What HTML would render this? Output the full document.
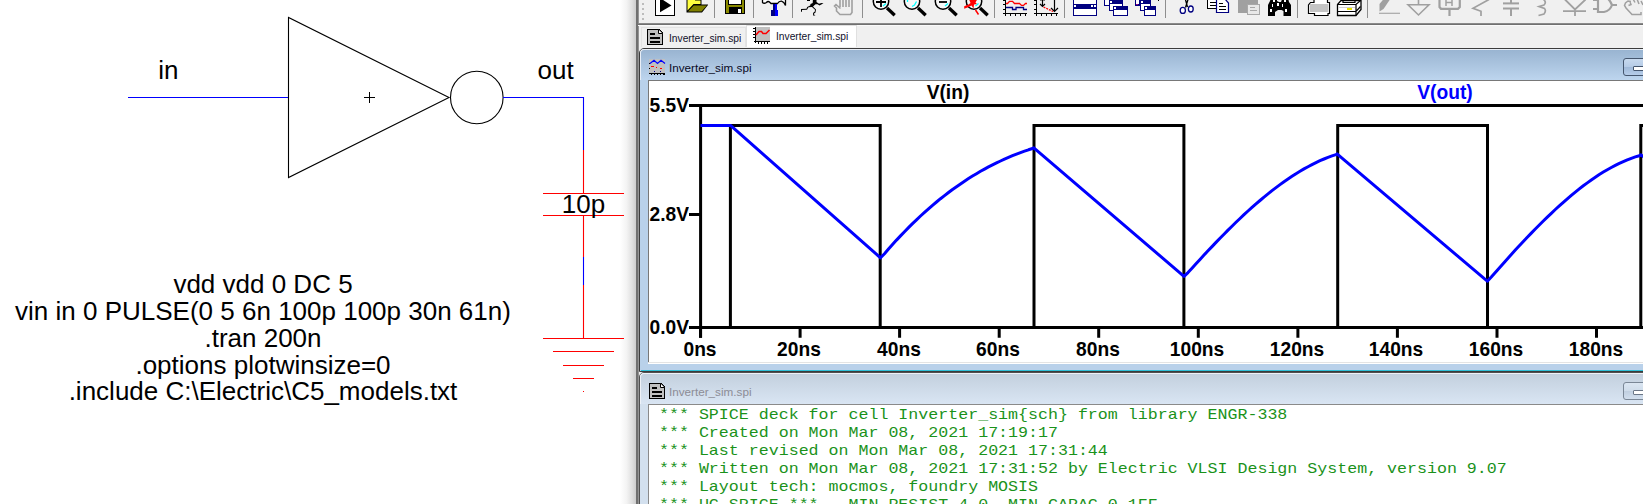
<!DOCTYPE html>
<html><head><meta charset="utf-8">
<style>
html,body{margin:0;padding:0;background:#fff;}
body{width:1643px;height:504px;position:relative;overflow:hidden;font-family:"Liberation Sans",sans-serif;}
.abs{position:absolute;}
.t{position:absolute;white-space:pre;color:#000;font-size:26px;}
#sch{position:absolute;left:0;top:0;width:640px;height:504px;}
.spice{line-height:26.8px;text-align:center;transform-origin:50% 0;}
#shadow{position:absolute;left:620px;top:0;width:16px;height:504px;background:linear-gradient(to right,#ffffff 0%,#f4f4f4 40%,#e0e0e0 75%,#cdcdcd 100%);}
#right{position:absolute;left:636px;top:0;width:1007px;height:504px;background:#f0f0f0;border-left:2px solid #707070;box-sizing:border-box;}
.ui{position:absolute;white-space:pre;font-size:11.5px;color:#000;}
.tab{font-size:11.2px;transform:scaleX(0.915);transform-origin:0 0;color:#10102a;}
.pl{position:absolute;white-space:pre;font-weight:bold;font-size:19.7px;color:#000;line-height:20px;transform:scaleX(0.975);}
.mono{font-family:"Liberation Mono",monospace;font-size:15px;line-height:17.95px;color:#1a921a;white-space:pre;position:absolute;left:659.1px;top:407.4px;transform:scaleX(1.108);transform-origin:0 0;}
.sep{position:absolute;top:0;width:1px;height:18px;background:#a0a0a0;}
</style></head><body>
<div id="shadow"></div>
<svg id="sch" viewBox="0 0 640 504">
  <g fill="none" stroke-width="1.1">
    <path d="M128 97.5H288" stroke="#0000ff"/>
    <path d="M288.5 17.5V177.5L449 97.5Z" stroke="#000"/>
    <circle cx="476.8" cy="97.5" r="26.3" stroke="#000"/>
    <path d="M364 97.5H375M369.500 92V103" stroke="#000" stroke-width="1"/>
    <path d="M503 97.5H583.5V150" stroke="#0000ff"/>
    <path d="M583.500 150V193M583.500 215V257M583.500 285V338" stroke="#ff0000"/>
    <path d="M583.500 257V285" stroke="#0000ff"/>
    <path d="M543 193.500H624M543 215.500H624" stroke="#ff0000"/>
    <path d="M543 338.500H624M553 351.500H614M563 365.500H604M573 378.500H594M583 391.500H584" stroke="#ff0000"/>
  </g>
</svg>
<div class="t" style="left:158.3px;top:55.2px;">in</div>
<div class="t" style="left:537.5px;top:55.2px;">out</div>
<div class="t" style="left:561.8px;top:189.2px;">10p</div>
<div class="t spice" style="left:0;top:271.3px;width:526px;">vdd vdd 0 DC 5
vin in 0 PULSE(0 5 6n 100p 100p 30n 61n)
.tran 200n
.options plotwinsize=0
.include C:\Electric\C5_models.txt</div>

<div id="right"></div>
<div class="abs" style="left:638px;top:0;width:1px;height:504px;background:#959595;"></div>

<!-- toolbar bottom line -->
<div class="abs" style="left:638px;top:23px;width:1005px;height:1px;background:#8a8a8a;"></div>
<div class="abs" style="left:638px;top:24px;width:1005px;height:1px;background:#707070;"></div>
<div class="abs" style="left:638px;top:25px;width:1005px;height:1px;background:#fafafa;"></div>
<!-- tabs -->
<div class="abs" style="left:641px;top:27px;width:105px;height:20px;border:1px solid #e3e3e3;border-bottom:none;box-sizing:border-box;background:#f0f0f0;"></div>
<div class="abs" style="left:746px;top:25px;width:111px;height:22px;background:#fff;border:1px solid #e0e0e0;border-bottom:none;box-sizing:border-box;"></div>
<div class="ui tab" style="left:669.3px;top:31.5px;">Inverter_sim.spi</div>
<div class="ui tab" style="left:775.8px;top:30px;">Inverter_sim.spi</div>

<!-- MDI window 1 -->
<div class="abs" style="left:639px;top:48px;width:1010px;height:324px;background:#b9d1ea;border:1px solid #3c3c3c;border-radius:5px 0 0 0;box-sizing:border-box;"></div>
<div class="abs" style="left:640px;top:49px;width:1003px;height:31px;background:linear-gradient(to bottom,#99b4d1,#bdd5ee);border-radius:4px 0 0 0;border-top:1px solid #e8eef6;border-left:1px solid #e8eef6;box-sizing:border-box;"></div>
<div class="abs" style="left:648px;top:80px;width:1000px;height:283px;background:#fff;border:1px solid #787878;border-bottom-color:#fff;box-sizing:border-box;"></div>
<div class="ui" style="left:669px;top:61.2px;font-size:11.7px;color:#0a0a1e;">Inverter_sim.spi</div>
<div class="abs" style="left:648px;top:362px;width:1000px;height:1px;background:#e4e4e4;"></div>
<div class="abs" style="left:648px;top:363px;width:1000px;height:1px;background:#fff;"></div>
<div class="abs" style="left:641px;top:370px;width:1010px;height:1px;background:#30c0d8;"></div>
<!-- min button -->
<div class="abs" style="left:1623px;top:58px;width:40px;height:18px;border:1px solid #45566e;border-radius:3px;box-sizing:border-box;background:linear-gradient(to bottom,#c7d9ee 0%,#b5cbe6 50%,#9fb9d8 50%,#b6cde9 100%);"></div>
<div class="abs" style="left:1633px;top:66px;width:20px;height:5px;border:1px solid #45566e;border-radius:1px;box-sizing:border-box;background:#fff;"></div>

<!-- plot -->
<svg class="abs" style="left:0;top:0;" width="1643" height="504" viewBox="0 0 1643 504">
 <g fill="none" stroke="#000" stroke-width="3" stroke-linejoin="miter">
  <path d="M689 105.6H1650M689 214.6H702M689 327.6H1650M700.6 104V337.8"/>
  <path d="M700.5 327V337.8M800.1 327V337.8M899.6 327V337.8M999.2 327V337.8M1098.7 327V337.8M1198.3 327V337.8M1297.9 327V337.8M1397.4 327V337.8M1497.0 327V337.8M1596.5 327V337.8"/>
  <path d="M700.5 327.6 L730.4 327.6 L730.4 125.6 L880.2 125.6 L880.2 327.6 L1034.0 327.6 L1034.0 125.6 L1183.9 125.6 L1183.9 327.6 L1337.7 327.6 L1337.7 125.6 L1487.5 125.6 L1487.5 327.6 L1640.8 327.6 L1640.8 125.6 L1650.0 125.6"/>
  <path d="M700.5 125.4 L730.5 125.4 L880.5 257.8 L884.5 253.7 L888.5 249.1 L892.5 244.5 L896.5 240.1 L900.5 235.9 L904.5 231.7 L908.5 227.6 L912.5 223.6 L916.5 219.8 L920.5 216.0 L924.5 212.4 L928.5 208.8 L932.5 205.3 L936.5 202.0 L940.5 198.7 L944.5 195.6 L948.5 192.5 L952.5 189.5 L956.5 186.7 L960.5 183.9 L964.5 181.2 L968.5 178.6 L972.5 176.1 L976.5 173.7 L980.5 171.3 L984.5 169.1 L988.5 166.9 L992.5 164.9 L996.5 162.9 L1000.5 161.0 L1004.5 159.1 L1008.5 157.4 L1012.5 155.7 L1016.5 154.1 L1020.5 152.6 L1024.5 151.2 L1028.5 149.8 L1032.5 148.5 L1033.8 147.8 L1184.0 276.4 L1188.0 272.6 L1192.0 268.2 L1196.0 263.8 L1200.0 259.4 L1204.0 255.1 L1208.0 250.8 L1212.0 246.6 L1216.0 242.4 L1220.0 238.2 L1224.0 234.2 L1228.0 230.1 L1232.0 226.2 L1236.0 222.3 L1240.0 218.5 L1244.0 214.7 L1248.0 211.0 L1252.0 207.4 L1256.0 203.9 L1260.0 200.5 L1264.0 197.1 L1268.0 193.9 L1272.0 190.7 L1276.0 187.6 L1280.0 184.6 L1284.0 181.7 L1288.0 179.0 L1292.0 176.3 L1296.0 173.7 L1300.0 171.3 L1304.0 168.9 L1308.0 166.7 L1312.0 164.6 L1316.0 162.6 L1320.0 160.7 L1324.0 159.0 L1328.0 157.4 L1332.0 155.9 L1336.0 154.6 L1337.0 153.8 L1487.3 281.2 L1491.3 276.9 L1495.3 272.4 L1499.3 267.9 L1503.3 263.4 L1507.3 258.9 L1511.3 254.5 L1515.3 250.1 L1519.3 245.8 L1523.3 241.5 L1527.3 237.3 L1531.3 233.1 L1535.3 229.0 L1539.3 225.0 L1543.3 221.0 L1547.3 217.1 L1551.3 213.3 L1555.3 209.5 L1559.3 205.9 L1563.3 202.3 L1567.3 198.8 L1571.3 195.4 L1575.3 192.1 L1579.3 188.9 L1583.3 185.8 L1587.3 182.9 L1591.3 180.0 L1595.3 177.3 L1599.3 174.6 L1603.3 172.1 L1607.3 169.7 L1611.3 167.5 L1615.3 165.4 L1619.3 163.4 L1623.3 161.6 L1627.3 159.9 L1631.3 158.3 L1635.3 156.9 L1639.3 155.7 L1641.0 154.8 L1650.0 162.0" stroke="#0000ff" stroke-linejoin="round"/>
 </g>
</svg>
<div class="pl" style="left:628.5px;top:95.3px;width:60px;text-align:right;transform-origin:100% 0;">5.5V</div>
<div class="pl" style="left:628.5px;top:204.3px;width:60px;text-align:right;transform-origin:100% 0;">2.8V</div>
<div class="pl" style="left:628.5px;top:317.3px;width:60px;text-align:right;transform-origin:100% 0;">0.0V</div>
<div class="pl" style="left:908px;top:81.8px;width:80px;text-align:center;">V(in)</div>
<div class="pl" style="left:1405px;top:81.8px;width:80px;text-align:center;color:#0000ff;">V(out)</div>
<div class="pl" style="left:659.5px;top:339.3px;width:80px;text-align:center;">0ns</div><div class="pl" style="left:759.1px;top:339.3px;width:80px;text-align:center;">20ns</div><div class="pl" style="left:858.6px;top:339.3px;width:80px;text-align:center;">40ns</div><div class="pl" style="left:958.2px;top:339.3px;width:80px;text-align:center;">60ns</div><div class="pl" style="left:1057.7px;top:339.3px;width:80px;text-align:center;">80ns</div><div class="pl" style="left:1157.3px;top:339.3px;width:80px;text-align:center;">100ns</div><div class="pl" style="left:1256.9px;top:339.3px;width:80px;text-align:center;">120ns</div><div class="pl" style="left:1356.4px;top:339.3px;width:80px;text-align:center;">140ns</div><div class="pl" style="left:1456.0px;top:339.3px;width:80px;text-align:center;">160ns</div><div class="pl" style="left:1555.5px;top:339.3px;width:80px;text-align:center;">180ns</div>

<!-- MDI window 2 -->
<div class="abs" style="left:639px;top:372px;width:1010px;height:200px;background:#d3e0ee;border:1px solid #505050;border-radius:5px 0 0 0;box-sizing:border-box;"></div>
<div class="abs" style="left:640px;top:373px;width:1003px;height:31px;background:linear-gradient(to bottom,#c3d0de,#d9e5f3);border-radius:4px 0 0 0;border-top:1px solid #eef2f8;border-left:1px solid #eef2f8;box-sizing:border-box;"></div>
<div class="abs" style="left:648px;top:404px;width:1000px;height:120px;background:#fff;border:1px solid #8a8a8a;box-sizing:border-box;"></div>
<div class="ui" style="left:669px;top:385.2px;font-size:11.7px;color:#8c8c96;">Inverter_sim.spi</div>
<div class="abs" style="left:1623px;top:382px;width:40px;height:18px;border:1px solid #7a8796;border-radius:3px;box-sizing:border-box;background:linear-gradient(to bottom,#dbe6f2 0%,#cfdcea 50%,#c0cfe0 50%,#d2dfee 100%);"></div>
<div class="abs" style="left:1633px;top:390px;width:20px;height:5px;border:1px solid #6b7787;border-radius:1px;box-sizing:border-box;background:#fff;"></div>
<div class="mono">*** SPICE deck for cell Inverter_sim{sch} from library ENGR-338
*** Created on Mon Mar 08, 2021 17:19:17
*** Last revised on Mon Mar 08, 2021 17:31:44
*** Written on Mon Mar 08, 2021 17:31:52 by Electric VLSI Design System, version 9.07
*** Layout tech: mocmos, foundry MOSIS
*** UC SPICE *** , MIN_RESIST 4.0, MIN_CAPAC 0.1FF</div>

<svg class="abs" style="left:0;top:0;" width="1643" height="504" viewBox="0 0 1643 504">
<!-- grip -->
<g fill="#bcbcbc" shape-rendering="crispEdges"><rect x="642" y="3" width="2" height="2"/><rect x="642" y="8" width="2" height="2"/><rect x="642" y="13" width="2" height="2"/><rect x="642" y="18" width="2" height="2"/></g>
<!-- separators -->
<g fill="#8e8e8e" shape-rendering="crispEdges">
<rect x="714" y="0" width="1" height="18"/><rect x="753" y="0" width="1" height="18"/><rect x="792" y="0" width="1" height="18"/><rect x="862" y="0" width="1" height="18"/><rect x="994" y="0" width="1" height="18"/><rect x="1064" y="0" width="1" height="18"/><rect x="1165" y="0" width="1" height="18"/><rect x="1297" y="0" width="1" height="18"/><rect x="1367" y="0" width="1" height="18"/>
</g>
<!-- play -->
<g shape-rendering="crispEdges"><rect x="655" y="-2" width="20" height="18" fill="#000"/><rect x="656" y="-2" width="18" height="17" fill="#fff"/></g>
<path d="M660 -2V12.300L671.500 5.400Z" fill="#000"/>
<!-- folder -->
<path d="M686.500 -2V12.500H702L708 5V4.500H701.500V-2Z" fill="#000"/>
<path d="M687.500 -2V10.500L693.500 4H700.500V0.500H695V-2Z" fill="#ffff40"/>
<path d="M688 11.600L693.800 5.400H706.800L701.500 11.600Z" fill="#808000"/>
<!-- save -->
<g shape-rendering="crispEdges"><rect x="725" y="-2" width="20" height="16" fill="#000"/><rect x="726" y="-2" width="18" height="15" fill="#8a8a00"/><rect x="728" y="-2" width="14" height="7" fill="#000"/><rect x="729" y="-2" width="12" height="6" fill="#fff"/><rect x="729" y="7" width="13" height="7" fill="#000"/><rect x="738" y="9" width="3" height="4" fill="#fff"/></g>
<!-- hammer -->
<path d="M762.500 -2V2.500Q764 4 766.500 2.500Q768 0.500 770 2.500L771 3.500H777.500Q779 1 781.500 1.200Q784 2 785.500 5.500V-2Z" fill="#fff" stroke="#000" stroke-width="1.300"/>
<g shape-rendering="crispEdges"><rect x="773" y="4" width="2" height="7" fill="#000080"/><rect x="775" y="4" width="2" height="7" fill="#0000ff"/><rect x="771" y="10" width="4" height="6" fill="#000080"/><rect x="775" y="10" width="3" height="6" fill="#0000ff"/></g>
<!-- runner -->
<path d="M813 -2H816.500V2L819 3.800L821.500 3L823.500 3.300L819.500 5.600L817.500 4.300L815.500 4.300L813 6.500L816 9.500L815.500 12.500L813.500 14L815.500 15.500H813V13L814.800 11.500L815 9.800L812 7L808.500 7.200L807 9.800L802 10V11.800H801V9L806.500 8.800L807.200 7L810.200 5.600L810.500 4L812.700 3Z" fill="#000"/>
<rect x="807" y="-1" width="3" height="2" fill="#000"/>
<!-- hand gray -->
<g fill="none" stroke="#a0a0a0" stroke-width="1.600"><path d="M840 -2V7M843 -2V7M846 -2V7M849 -2V7M852 -2V12.500L850.500 14.500H840L836.500 11V8L834.500 6L836 4.500L840.500 8.500"/></g>
<!-- magnifiers -->
<g id="mag1"><circle cx="881" cy="1.6" r="7.7" fill="#f8f8f8" stroke="#000" stroke-width="1.500"/><path d="M887 8L894.7 15.2" stroke="#000" stroke-width="3.3" fill="none"/><path d="M883 6L886 3.500" stroke="#00ffff" stroke-width="1.300"/><path d="M876 2H886M881 -3V7" stroke="#000" stroke-width="1.800"/></g>
<g id="mag2"><circle cx="912" cy="1.6" r="7.7" fill="#f8f8f8" stroke="#000" stroke-width="1.500"/><path d="M918 8L925.7 15.2" stroke="#000" stroke-width="3.3" fill="none"/><path d="M912 6.500L914.500 5L916.500 1.500M907.500 -2V2" stroke="#00ffff" stroke-width="1.300" fill="none"/></g>
<g id="mag3"><circle cx="943" cy="1.6" r="7.7" fill="#f8f8f8" stroke="#000" stroke-width="1.500"/><path d="M949 8L956.7 15.2" stroke="#000" stroke-width="3.3" fill="none"/><path d="M945 6L948 3.500" stroke="#00ffff" stroke-width="1.300"/><path d="M939 2H947" stroke="#000" stroke-width="1.800"/></g>
<g id="mag4"><circle cx="974" cy="1.6" r="7.7" fill="#f8f8f8" stroke="#000" stroke-width="1.500"/><path d="M980 8L987.7 15.2" stroke="#000" stroke-width="3.3" fill="none"/><path d="M975.500 6L978.500 3.500" stroke="#00ffff" stroke-width="1.300"/><path d="M968.500 -2L971 0L973 -2.500L974.500 0L978 -2L975.500 2.500L977 4L974 4.500L973.500 8.500L971.500 5.500L967.500 7.500L964.200 8.800V6.300L968.500 4.500L970.500 3Z" fill="#ff0000"/><path d="M975.500 10L978.500 14.500" stroke="#ff0000" stroke-width="1.500"/></g>
<!-- chart 1 -->
<g stroke="#000" stroke-width="1.200" fill="none" shape-rendering="crispEdges"><path d="M1005.500 -2V16M1003 13.500H1027M1010.500 13V16M1015.500 13V16M1020.500 13V16M1025.500 13V16M1003 0.500H1005M1003 4.500H1005M1003 9.500H1005"/></g>
<path d="M1006 3.500H1007.500L1009.500 1.300H1012.500L1014.500 3.500H1019.500L1021.500 5.400H1023.500L1025.500 3.500H1027" stroke="#ff0000" stroke-width="1.300" fill="none"/>
<path d="M1006 7.500H1012.500V9.500H1016V7.500H1023.500V9.500H1027" stroke="#000080" stroke-width="1.300" fill="none"/>
<!-- chart 2 -->
<g stroke="#000" stroke-width="1.200" fill="none" shape-rendering="crispEdges"><path d="M1036.500 -2V16M1034 13.500H1058M1041.500 13V16M1046.500 13V16M1051.500 13V16M1056.500 13V16M1034 0.500H1036M1034 4.500H1036M1034 9.500H1036"/></g>
<path d="M1042.500 -2V6.500M1040 4L1042.500 6.500L1045 4M1040.500 0.500L1042.500 -1.500L1044.500 0.500M1054.500 -2V11.500M1051 8L1054.500 11.500L1058 8" stroke="#000" stroke-width="1.200" fill="none"/>
<path d="M1043.500 7L1053 11.500" stroke="#ff0000" stroke-width="1.300" stroke-dasharray="2 1" fill="none"/>
<!-- tile -->
<g shape-rendering="crispEdges"><rect x="1073" y="-2" width="24" height="18" fill="#000080"/><rect x="1074" y="-2" width="22" height="6" fill="#fff"/><rect x="1074" y="9" width="22" height="6" fill="#fff"/><rect x="1074" y="5" width="2" height="2" fill="#fff"/><rect x="1091" y="5" width="2" height="2" fill="#fff"/><rect x="1094" y="5" width="2" height="2" fill="#fff"/></g>
<!-- cascade 1 -->
<g shape-rendering="crispEdges"><rect x="1104" y="-2" width="19" height="8" fill="#000080"/><rect x="1105" y="-2" width="4" height="7" fill="#fff"/><rect x="1110" y="1" width="2" height="2" fill="#fff"/>
<rect x="1109" y="4" width="14" height="7" fill="#000080"/><rect x="1110" y="4" width="12" height="6" fill="#fff"/>
<rect x="1113" y="6" width="15" height="10" fill="#000080"/><rect x="1114" y="10" width="13" height="5" fill="#fff"/><rect x="1114" y="7" width="2" height="2" fill="#fff"/></g>
<!-- cascade 2 -->
<g shape-rendering="crispEdges"><rect x="1135" y="-2" width="16" height="8" fill="#000080"/><rect x="1136" y="-2" width="3" height="6" fill="#fff"/><rect x="1141" y="1" width="2" height="2" fill="#fff"/><rect x="1136" y="4" width="2" height="1" fill="#a00080"/>
<rect x="1140" y="4" width="11" height="7" fill="#000080"/><rect x="1141" y="4" width="9" height="6" fill="#fff"/>
<rect x="1144" y="6" width="12" height="10" fill="#000080"/><rect x="1145" y="10" width="10" height="5" fill="#fff"/><rect x="1145" y="7" width="2" height="2" fill="#fff"/><rect x="1158" y="-1" width="1" height="2" fill="#000"/></g>
<!-- scissors -->
<path d="M1185 -2L1187.500 7M1188.500 -2L1185.500 7.500" stroke="#000" stroke-width="1.300" fill="none"/>
<ellipse cx="1182.800" cy="10.400" rx="2.600" ry="3" fill="#fff" stroke="#000080" stroke-width="1.300"/>
<ellipse cx="1190.800" cy="9" rx="2.400" ry="3" fill="#fff" stroke="#000080" stroke-width="1.300"/>
<!-- copy -->
<g shape-rendering="crispEdges"><rect x="1207" y="-2" width="11" height="11" fill="#000"/><rect x="1208" y="-2" width="9" height="10" fill="#fff"/><rect x="1210" y="2" width="6" height="1" fill="#000"/><rect x="1210" y="5" width="6" height="1" fill="#000"/></g>
<path d="M1216.500 -2V12.500H1228.500V3L1225 -1" fill="#fff" stroke="#000080" stroke-width="1.200"/>
<g shape-rendering="crispEdges" fill="#000"><rect x="1219" y="3" width="4" height="1"/><rect x="1219" y="6" width="7" height="1"/><rect x="1219" y="9" width="7" height="1"/></g>
<!-- paste gray -->
<g shape-rendering="crispEdges"><rect x="1238" y="-2" width="20" height="15" fill="#a0a0a0"/><rect x="1247" y="4" width="13" height="11" fill="#a8a8a8"/><rect x="1248" y="5" width="11" height="9" fill="#e8e8e8"/><rect x="1250" y="7" width="5" height="1" fill="#a8a8a8"/><rect x="1250" y="10" width="7" height="1" fill="#a8a8a8"/></g>
<!-- binoculars -->
<path d="M1268 16V5L1270 1L1271 -2H1277V1L1279 2H1281L1282.500 -2H1288L1289 2L1291 5V16H1283.500V11L1281.500 10H1278L1275 12V16Z" fill="#000"/>
<g shape-rendering="crispEdges" fill="#fff"><rect x="1272" y="4" width="1" height="3"/><rect x="1270" y="9" width="2" height="3"/><rect x="1277" y="3" width="2" height="3"/><rect x="1282" y="4" width="1" height="3"/><rect x="1285" y="9" width="2" height="3"/><rect x="1273" y="0" width="2" height="2"/><rect x="1284" y="0" width="2" height="2"/></g>
<!-- printer 1 -->
<path d="M1314 -2V2.500H1310.500L1308.500 5V13.500H1314.500V15.500H1328V13.500H1329.500V2.500H1327.500V-2" fill="#fff" stroke="#000" stroke-width="1.200"/>
<rect x="1310" y="4" width="18" height="8" fill="#c4c4c4"/>
<!-- printer 2 -->
<path d="M1337.500 15.500V4.500L1341 0.500H1361V9.500L1356 15.500Z" fill="#fff" stroke="#000" stroke-width="1.300"/>
<path d="M1337.500 4.500H1356L1360.500 0.500M1356 4.500V15.500M1337.500 11.500H1356L1360.500 6.500M1343 -2V2.500H1355V-2" fill="none" stroke="#000" stroke-width="1.200"/>
<rect x="1347" y="8" width="5" height="2" fill="#e8e000"/><rect x="1339" y="7" width="16" height="1" fill="#d0d0d0"/>
<!-- pencil gray -->
<path d="M1384.500 -2H1391L1383.500 9L1379.500 11.500V4Z" fill="#a0a0a0"/><path d="M1379 13.300H1400" stroke="#a8a8a8" stroke-width="1.200"/>
<!-- ground gray -->
<path d="M1418.500 -2V4.500M1408 4.700H1429L1418.500 15Z" fill="none" stroke="#a0a0a0" stroke-width="1.600"/>
<!-- box H -->
<path d="M1439.500 -2V7L1441 8.800H1458L1459.800 7V-2M1449.500 9V16" fill="none" stroke="#a0a0a0" stroke-width="2.200"/>
<path d="M1446 -2V6M1452 -2V6M1446 2.500H1452" fill="none" stroke="#a0a0a0" stroke-width="1.500"/>
<!-- resistor -->
<path d="M1489 -0.500L1473 8.300L1481 11.300V16" fill="none" stroke="#a0a0a0" stroke-width="1.700"/>
<!-- capacitor -->
<g fill="#a0a0a0"><rect x="1510" y="-2" width="2" height="5"/><rect x="1503" y="2.4" width="16" height="2"/><rect x="1503" y="7.5" width="16" height="2"/><rect x="1510" y="9" width="2" height="7"/></g>
<!-- inductor -->
<path d="M1543 -1Q1547 2 1544 5L1539 6.500L1544.500 8.500Q1546.500 11 1544 14L1538.500 15.500" fill="none" stroke="#a0a0a0" stroke-width="1.700"/>
<!-- diode -->
<path d="M1565 -0.500L1575 9.500L1585.500 -0.500M1563 11.200H1586M1575 11V16" fill="none" stroke="#a0a0a0" stroke-width="1.800"/>
<!-- gate -->
<path d="M1593 0H1598M1593 9H1598M1598 -2V12H1604Q1610 11 1612 5Q1610 0 1607 -2M1612 5H1617" fill="none" stroke="#a0a0a0" stroke-width="2.200"/>
<!-- hand right -->
<path d="M1631 1.500L1628 1L1625.500 3L1624.500 5.500L1626 8L1632 14.500H1641V12M1628.500 5.500L1631 4.500L1630 2M1633 -1L1635 2.500M1637 -1L1639 4M1641 1L1643 5" fill="none" stroke="#a0a0a0" stroke-width="1.500"/>

<!-- tab icon doc -->
<g shape-rendering="crispEdges"><path d="M647 29H659L663 33V45H647Z" fill="#000"/><path d="M648 30H658.500L662 33.500V44H648Z" fill="#c0c0c0"/></g>
<path d="M658.500 29.500V33.500H662.500" fill="#fff" stroke="#000" stroke-width="1"/>
<g shape-rendering="crispEdges" fill="#000"><rect x="650" y="33" width="5" height="2"/><rect x="650" y="37" width="10" height="2"/><rect x="650" y="41" width="10" height="2"/></g>
<!-- tab icon wave -->
<g shape-rendering="crispEdges"><rect x="756" y="27" width="14" height="14" fill="#c0c0c0"/><rect x="755" y="27" width="1" height="16" fill="#000"/><rect x="754" y="41" width="16" height="1" fill="#000"/>
<g fill="#000"><rect x="753" y="28" width="2" height="1"/><rect x="753" y="31" width="2" height="1"/><rect x="753" y="34" width="2" height="1"/><rect x="753" y="37" width="2" height="1"/><rect x="758" y="42" width="1" height="2"/><rect x="761" y="42" width="1" height="2"/><rect x="764" y="42" width="1" height="2"/><rect x="767" y="42" width="1" height="2"/></g></g>
<path d="M756 35L759 31.500H761.500L763 33.500H766L769.500 30" fill="none" stroke="#ff0000" stroke-width="1.500"/>

<!-- title icon wave -->
<g shape-rendering="crispEdges"><rect x="649" y="59" width="16" height="15" fill="#c0c0c0"/><rect x="649" y="73" width="16" height="1" fill="#000"/><rect x="649" y="63" width="1" height="1" fill="#000"/><rect x="649" y="68" width="1" height="1" fill="#000"/>
<g fill="#000"><rect x="651" y="74" width="1" height="1"/><rect x="654" y="74" width="1" height="1"/><rect x="657" y="74" width="1" height="1"/><rect x="660" y="74" width="1" height="1"/><rect x="663" y="74" width="2" height="1"/></g>
<rect x="651" y="66" width="3" height="1" fill="#ff0000"/><rect x="656" y="67" width="1" height="1" fill="#ff0000"/><rect x="660" y="68" width="2" height="1" fill="#ff0000"/>
<rect x="654" y="71" width="1" height="1" fill="#000080"/><rect x="660" y="71" width="1" height="1" fill="#000080"/></g>
<path d="M650 63.500L654 60.300L657.500 63.500L661 60.300L665 63.500" fill="none" stroke="#0000ff" stroke-width="1.200"/>
<!-- title icon doc (window 2) -->
<g shape-rendering="crispEdges"><path d="M649 383H661L665 387V399H649Z" fill="#000"/><path d="M650 384H660.500L664 387.500V398H650Z" fill="#c0c0c0"/></g>
<path d="M660.500 383.500V387.500H664.500" fill="#fff" stroke="#000" stroke-width="1"/>
<g shape-rendering="crispEdges" fill="#000"><rect x="652" y="387" width="5" height="2"/><rect x="652" y="391" width="10" height="2"/><rect x="652" y="395" width="10" height="2"/></g>
</svg>

</body></html>
